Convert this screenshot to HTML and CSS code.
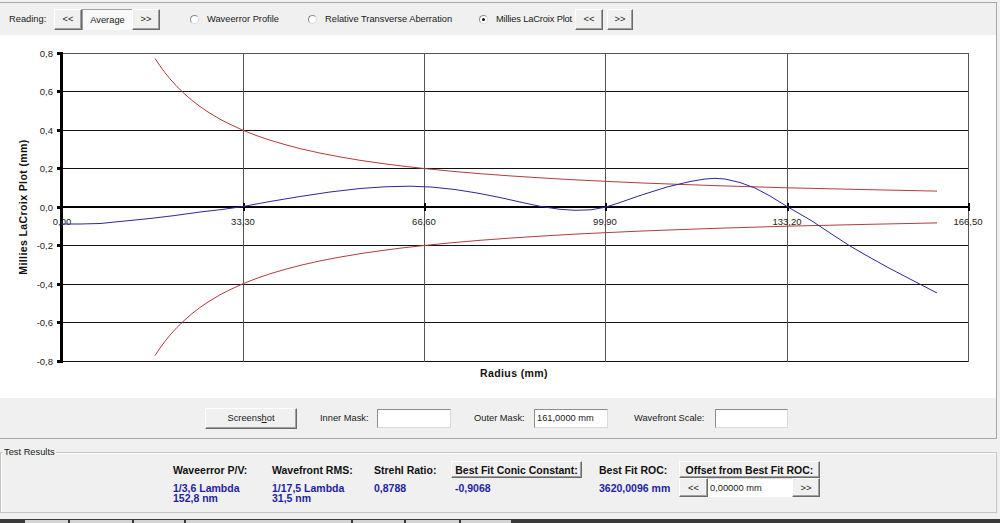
FILE: index.html
```html
<!DOCTYPE html>
<html>
<head>
<meta charset="utf-8">
<link rel="stylesheet" href="styles.css">
</head>
<body>
<div class="app">
  <div class="main">
    <div class="toolbar">
      <span class="reading">Reading:</span>
      <div class="nav">
        <div class="btn nb">&lt;&lt;</div>
        <div class="avg">Average</div>
        <div class="btn nb">&gt;&gt;</div>
      </div>
      <div class="radio r1"><span class="dot"></span>Waveerror Profile</div>
      <div class="radio r2"><span class="dot"></span>Relative Transverse Aberration</div>
      <div class="radio r3"><span class="dot checked"></span><span class="tight">Millies LaCroix Plot</span></div>
      <div class="nav2">
        <div class="btn nb">&lt;&lt;</div>
        <div class="btn nb2">&gt;&gt;</div>
      </div>
    </div>
    <div class="chart">
      <svg class="plot" width="996" height="363" viewBox="0 35 996 363" xmlns="http://www.w3.org/2000/svg">
        <g shape-rendering="crispEdges">
          <g stroke="#111" stroke-width="1">
            <line x1="61" y1="91.5" x2="968" y2="91.5"/>
            <line x1="61" y1="130.5" x2="968" y2="130.5"/>
            <line x1="61" y1="168.5" x2="968" y2="168.5"/>
            <line x1="61" y1="245.5" x2="968" y2="245.5"/>
            <line x1="61" y1="284.5" x2="968" y2="284.5"/>
            <line x1="61" y1="322.5" x2="968" y2="322.5"/>
            <line x1="61" y1="361.5" x2="968" y2="361.5"/>
          </g>
          <g stroke="#555" stroke-width="1">
            <line x1="61" y1="53.5" x2="968" y2="53.5"/>
            <line x1="243.5" y1="53" x2="243.5" y2="362"/>
            <line x1="424.5" y1="53" x2="424.5" y2="362"/>
            <line x1="605.5" y1="53" x2="605.5" y2="362"/>
            <line x1="787.5" y1="53" x2="787.5" y2="362"/>
            <line x1="968.5" y1="53" x2="968.5" y2="362"/>
          </g>
          <line x1="61" y1="207" x2="969" y2="207" stroke="#000" stroke-width="2"/>
          <line x1="61" y1="52" x2="61" y2="363" stroke="#000" stroke-width="3"/>
          <g stroke="#000" stroke-width="3">
            <line x1="57" y1="53.5" x2="62" y2="53.5"/>
            <line x1="57" y1="91.5" x2="62" y2="91.5"/>
            <line x1="57" y1="130.5" x2="62" y2="130.5"/>
            <line x1="57" y1="168.5" x2="62" y2="168.5"/>
            <line x1="57" y1="207" x2="62" y2="207"/>
            <line x1="57" y1="245.5" x2="62" y2="245.5"/>
            <line x1="57" y1="284.5" x2="62" y2="284.5"/>
            <line x1="57" y1="322.5" x2="62" y2="322.5"/>
            <line x1="57" y1="361.5" x2="62" y2="361.5"/>
          </g>
          <g stroke="#000" stroke-width="2">
            <line x1="243.5" y1="203" x2="243.5" y2="211"/>
            <line x1="424.5" y1="203" x2="424.5" y2="211"/>
            <line x1="605.5" y1="203" x2="605.5" y2="211"/>
            <line x1="787.5" y1="203" x2="787.5" y2="211"/>
            <line x1="968.5" y1="203" x2="968.5" y2="211"/>
          </g>
        </g>
        <g class="ylab" text-anchor="end">
          <text x="53" y="56.5">0,8</text>
          <text x="53" y="95">0,6</text>
          <text x="53" y="133.5">0,4</text>
          <text x="53" y="172">0,2</text>
          <text x="53" y="210.5">0,0</text>
          <text x="53" y="249">-0,2</text>
          <text x="53" y="287.5">-0,4</text>
          <text x="53" y="326">-0,6</text>
          <text x="53" y="364.5">-0,8</text>
        </g>
        <g class="xlab" text-anchor="middle">
          <text x="62" y="225">0,00</text>
          <text x="243" y="225">33,30</text>
          <text x="424" y="225">66,60</text>
          <text x="605" y="225">99,90</text>
          <text x="787" y="225">133,20</text>
          <text x="968" y="225">166,50</text>
        </g>
        <polyline class="red" points="155,58.4 160,65.9 165,72.7 170,78.9 177,86.6 185,94.3 192,100.4 200,106.5 208,112 220,119.2 230,124.3 243,130.3 256,135.4 270,140.2 285,144.6 300,148.6 320,153.1 340,156.9 360,160.3 380,163.2 400,165.8 424,168.5 450,171.1 480,173.7 510,175.9 540,177.8 570,179.6 605,181.3 640,182.9 680,184.4 720,185.8 787,187.8 800,188.1 870,189.7 937,191.1"/>
        <polyline class="red" points="155,355.6 160,348.1 165,341.3 170,335.1 177,327.4 185,319.7 192,313.6 200,307.5 208,302 220,294.8 230,289.7 243,283.7 256,278.6 270,273.8 285,269.4 300,265.4 320,260.9 340,257.1 360,253.7 380,250.8 400,248.2 424,245.5 450,242.9 480,240.3 510,238.1 540,236.2 570,234.4 605,232.7 640,231.1 680,229.6 720,228.2 787,226.2 800,225.9 870,224.3 937,222.9"/>
        <polyline class="blue" points="61,224 80,224 100,223.5 125,221 150,218.5 175,215.5 200,212 222,209.5 243,206.5 270,201.5 300,196.5 330,192 360,188.5 385,186.8 410,186.2 431,187 455,189.5 477,193 500,197.5 520,202 541,206.5 560,209.3 575,210.3 591,209.8 606,207 620,202.5 640,195.5 667,187 690,181.5 705,179 715,178.3 725,179 740,182.5 755,188 770,196 787,206.5 800,214 812,221 830,233 850,246 870,257.5 888,267.5 910,279 937,293"/>
        <text class="axt" x="24" y="207" transform="rotate(-90 24 207)" text-anchor="middle" dominant-baseline="middle">Millies LaCroix Plot (mm)</text>
        <text class="axt" x="514" y="377" text-anchor="middle">Radius (mm)</text>
      </svg>
    </div>
    <div class="controls">
      <div class="btn shot">Screens<u>h</u>ot</div>
      <span class="clabel l1">Inner Mask:</span>
      <div class="field f1"></div>
      <span class="clabel l2">Outer Mask:</span>
      <div class="field f2">161,0000 mm</div>
      <span class="clabel l3">Wavefront Scale:</span>
      <div class="field f3"></div>
    </div>
  </div>
  <div class="results">
    <span class="legend">Test Results</span>
    <div class="res-row">
      <div class="col c1">
        <div class="head">Waveerror P/V:</div>
        <div class="val">1/3,6 Lambda<br>152,8 nm</div>
      </div>
      <div class="col c2">
        <div class="head">Wavefront RMS:</div>
        <div class="val">1/17,5 Lambda<br>31,5 nm</div>
      </div>
      <div class="col c3">
        <div class="head">Strehl Ratio:</div>
        <div class="val">0,8788</div>
      </div>
      <div class="col c4">
        <div class="head btn hbtn">Best Fit Conic Constant:</div>
        <div class="val pad">-0,9068</div>
      </div>
      <div class="col c5">
        <div class="head">Best Fit ROC:</div>
        <div class="val">3620,0096 mm</div>
      </div>
      <div class="col c6">
        <div class="head btn hbtn">Offset from Best Fit ROC:</div>
        <div class="offrow">
          <div class="btn ob1">&lt;&lt;</div>
          <div class="ofield">0,00000 mm</div>
          <div class="btn ob2">&gt;&gt;</div>
        </div>
      </div>
    </div>
  </div>
  <div class="status">
    <span class="seg s1"></span>
    <span class="seg s2"></span>
    <span class="seg s3"></span>
    <span class="seg s4"></span>
    <span class="seg s5"></span>
    <span class="seg s6"></span>
    <span class="seg s7"></span>
  </div>
</div>
</body>
</html>
```

FILE: styles.css
```css
* { box-sizing: border-box; }
html, body { margin: 0; padding: 0; }
body {
  width: 1000px;
  height: 523px;
  overflow: hidden;
  background: #f0f0f0;
  font-family: "Liberation Sans", Arial, sans-serif;
  font-size: 9.3px;
  color: #1a1a1a;
}
.app {
  display: flex;
  flex-direction: column;
  height: 523px;
  padding-top: 2px;
}
.main {
  width: 997px;
  border-top: 1px solid #a8a8a8;
  border-right: 1px solid #a8a8a8;
  border-bottom: 1px solid #a8a8a8;
}
.toolbar {
  height: 32px;
  display: flex;
  align-items: center;
}
.reading { margin-left: 9px; width: 45px; }
.nav { display: flex; height: 21px; }
.btn {
  background: #f0f0f0;
  border: 1px solid;
  border-color: #fff #6a6a6a #6a6a6a #fff;
  box-shadow: inset -1px -1px #a0a0a0;
  display: flex;
  align-items: center;
  justify-content: center;
  color: #1a1a1a;
}
.nb { width: 28px; height: 21px; }
.nb2 { width: 26px; height: 21px; }
.avg {
  width: 50px;
  background: #f9f9f9;
  border-top: 1px solid #a0a0a0;
  border-left: 1px solid #a0a0a0;
  display: flex;
  align-items: center;
  justify-content: center;
}
.radio { display: flex; align-items: center; white-space: nowrap; }
.r1 { margin-left: 30px; width: 118px; }
.r2 { width: 171px; }
.r3 { width: 96px; }
.tight { letter-spacing: -0.15px; }
.dot {
  width: 9px;
  height: 9px;
  border-radius: 50%;
  border: 1px solid;
  border-color: #8a8a8a #dcdcdc #dcdcdc #8a8a8a;
  background: #fff;
  margin-right: 8px;
  display: flex;
  align-items: center;
  justify-content: center;
}
.dot.checked::after {
  content: "";
  width: 3px;
  height: 3px;
  border-radius: 50%;
  background: #111;
}
.nav2 { display: flex; gap: 4px; }

.chart { height: 363px; background: #fff; width: 996px; }
.plot { display: block; }
.ylab text, .xlab text {
  font-family: "Liberation Sans", Arial, sans-serif;
  font-size: 9.5px;
  fill: #222;
}
.axt {
  font-family: "Liberation Sans", Arial, sans-serif;
  font-size: 10.5px;
  font-weight: bold;
  fill: #111;
  letter-spacing: 0.4px;
}
.red { fill: none; stroke: #b43c3c; stroke-width: 1; stroke-linejoin: round; }
.blue { fill: none; stroke: #2a2a9a; stroke-width: 1; stroke-linejoin: round; }

.controls {
  height: 40px;
  display: flex;
  align-items: center;
  padding-left: 205px;
}
.shot { width: 92px; height: 21px; }
.shot u { text-decoration: underline; }
.clabel { white-space: nowrap; }
.l1 { margin-left: 23px; width: 57px; }
.l2 { margin-left: 23px; width: 60px; }
.l3 { margin-left: 26px; width: 81px; }
.field {
  height: 19px;
  background: #fff;
  border: 1px solid;
  border-color: #8c8c8c #dadada #dadada #8c8c8c;
  padding-left: 2px;
  display: flex;
  align-items: center;
}
.f1 { width: 74px; }
.f2 { width: 74px; }
.f3 { width: 73px; }

.results {
  margin-top: 13px;
  width: 997px;
  height: 61px;
  border: 1px solid #c4c4c4;
  box-shadow: inset 1px 1px #fff;
  position: relative;
}
.legend {
  position: absolute;
  top: -7px;
  left: 2px;
  padding: 0 1px;
  line-height: 12px;
  background: #f0f0f0;
}
.res-row {
  display: flex;
  padding-top: 8px;
  padding-left: 172px;
}
.col { display: flex; flex-direction: column; }
.head {
  height: 17px;
  display: flex;
  align-items: center;
  font-weight: bold;
  font-size: 10.5px;
  white-space: nowrap;
  color: #111;
}
.val {
  font-weight: bold;
  font-size: 10.5px;
  line-height: 10px;
  color: #1f1f9f;
  margin-top: 5px;
  white-space: nowrap;
}
.val.pad { padding-left: 4px; }
.c1 { width: 99px; }
.c2 { width: 102px; }
.c3 { width: 77px; }
.c4 { width: 131px; }
.c5 { margin-left: 17px; width: 80px; }
.c6 { width: 141px; }
.hbtn { justify-content: center; }
.offrow { display: flex; height: 19px; }
.ob1 { width: 29px; height: 19px; }
.ob2 { width: 28px; height: 19px; }
.ofield {
  width: 84px;
  height: 19px;
  background: #fff;
  padding-left: 2px;
  display: flex;
  align-items: center;
  border-top: 1px solid #e0e0e0;
}

.status {
  margin-top: 6px;
  height: 4px;
  background: #3a3a3a;
  display: flex;
  gap: 2px;
  padding-left: 25px;
}
.seg { height: 3px; margin-top: 1px; background: #d4d4d4; }
.s1 { width: 43px; }
.s2 { width: 62px; }
.s3 { width: 50px; }
.s4 { width: 165px; }
.s5 { width: 51px; }
.s6 { width: 53px; }
.s7 { width: 50px; }
```
